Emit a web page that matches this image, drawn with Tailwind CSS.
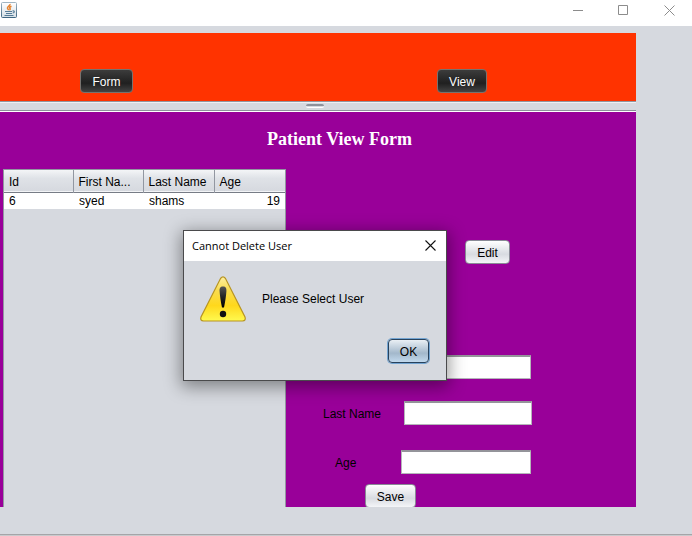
<!DOCTYPE html>
<html lang="en">
<head>
<meta charset="utf-8">
<title>Patient View Form</title>
<script src="https://cdn.jsdelivr.net/npm/@tailwindcss/browser@4"></script>
</head>
<body class="relative flex min-h-screen flex-col overflow-hidden bg-[#d6d9df] font-['Liberation_Sans',Arial,sans-serif] text-[12px] leading-4 text-black">
  <header class="flex h-[26px] items-start justify-between bg-white">
    <svg class="mt-0.5 ml-px size-4" viewBox="0 0 16 16" fill="none" aria-label="Java">
      <defs><linearGradient id="jb" x1="0" y1="0" x2="0" y2="1"><stop stop-color="#fff"/><stop offset="1" stop-color="#d5dfe6"/></linearGradient>
      <linearGradient id="js" x1="0" y1="0" x2="0" y2="1"><stop stop-color="#9fb4c2"/><stop offset="1" stop-color="#3f6681"/></linearGradient></defs>
      <rect x=".5" y=".5" width="15" height="15" rx="1" fill="url(#jb)" stroke="url(#js)"/>
      <path d="M9 2c.6 1.600-3 2.600-2.500 4.300.2.700 1 1.200 1 1.900M10.500 4.300C8.500 5 8.300 5.800 9 6.500c.5.700 0 1.300-.6 1.700" stroke="#e5822e" stroke-width="1.500"/>
      <path d="M4 9.500h7M5 11.500h6M3.500 13.500h9M11.500 9c2.500-.6 2.200 1.800.2 2" stroke="#557c97" stroke-width="1.200"/>
    </svg>
    <div class="flex text-[#8c8c8c]">
      <button type="button" aria-label="Minimize" class="flex h-5 w-[46px] items-center justify-center"><svg class="size-[11px]" viewBox="0 0 11 11" stroke="currentColor"><path d="M1 5.500h10"/></svg></button>
      <button type="button" aria-label="Maximize" class="flex h-5 w-[46px] items-center justify-center"><svg class="size-[11px]" viewBox="0 0 11 11" stroke="currentColor" fill="none"><path d="M.5.5h9v9h-9z"/></svg></button>
      <button type="button" aria-label="Close" class="flex h-5 w-[46px] items-center justify-center"><svg class="size-[11px]" viewBox="0 0 11 11" stroke="currentColor"><path d="M.5.5l10 10M10.500.5l-10 10"/></svg></button>
    </div>
  </header>

  <main class="mt-[7px] mr-14 flex flex-1 flex-col">
    <nav class="grid h-[68px] grid-cols-[357fr_199fr] items-end bg-[#ff3300] pb-2 pl-20">
      <div><button type="button" class="block h-6 w-[53px] rounded-[4px] border border-[#77736f] bg-linear-to-b from-[#3c3c3c] via-[#202020] via-60% to-[#444] pt-0.5 text-white">Form</button></div>
      <div><button type="button" class="block h-6 w-[50px] rounded-[4px] border border-[#77736f] bg-linear-to-b from-[#3c3c3c] via-[#202020] via-60% to-[#444] pt-0.5 text-white">View</button></div>
    </nav>
    <div class="flex h-[11px] flex-col border-t border-[#9297a1] bg-[#d6d9df]">
      <div class="flex h-2 justify-center border-t border-[#eff0f3] pt-px pr-1.5"><span class="h-1 w-[18px] rounded-sm border-t-2 border-b border-t-[#8d929b] border-b-white bg-[#d6d9df]"></span></div>
      <div class="h-px bg-[#8d919b]"></div>
      <div class="h-px bg-white"></div>
    </div>

    <section class="flex h-[395px] flex-col overflow-hidden bg-[#990099]">
      <h1 class="mt-[17px] h-10 shrink-0 pl-[43px] text-center font-['Liberation_Serif','Times_New_Roman',serif] text-[18px] leading-5 font-bold text-white">Patient View Form</h1>
      <div class="flex flex-1">
        <div class="ml-[3px] w-[283px] border-x border-t border-[#9297a1] bg-[#d6d9df]">
          <table class="w-full table-fixed border-collapse text-left">
            <thead>
              <tr class="h-[22px] border-b border-[#777c86] bg-linear-to-b from-[#f4f5f7] via-[#dfe2e7] via-40% to-[#d6d9df]">
                <th class="w-[69px] border-r border-[#9297a1] px-[5px] pt-0.5 font-normal">Id</th>
                <th class="w-[70px] border-r border-[#9297a1] px-[5px] pt-0.5 font-normal">First Na...</th>
                <th class="w-[71px] border-r border-[#9297a1] pt-0.5 pl-[5px] font-normal whitespace-nowrap">Last Name</th>
                <th class="px-[5px] pt-0.5 font-normal">Age</th>
              </tr>
            </thead>
            <tbody>
              <tr class="h-4 bg-white"><td class="px-[5px]">6</td><td class="px-1.5">syed</td><td class="px-1.5">shams</td><td class="px-[5px] text-right">19</td></tr>
            </tbody>
          </table>
        </div>
        <form class="flex flex-1 flex-col items-start pt-[71px]">
          <button type="button" class="ml-[179px] h-6 w-[45px] shrink-0 rounded-[4px] border border-[#898b96] bg-linear-to-b from-white via-[#d8dbe1] via-60% to-[#f4f5f8] pt-0.5">Edit</button>
          <div class="mt-[91px] flex items-center pl-[37px]">
            <label for="first" class="w-[81px]">First Name</label>
            <input id="first" type="text" class="h-6 w-[127px] border border-t-2 border-[#b5b5ba] border-t-[#94949a] bg-white px-1.5">
          </div>
          <div class="mt-[22px] flex items-center pl-[37px]">
            <label for="last" class="w-[81px] pt-0.5">Last Name</label>
            <input id="last" type="text" class="h-6 w-32 border border-t-2 border-[#b5b5ba] border-t-[#94949a] bg-white px-1.5">
          </div>
          <div class="mt-[25px] flex items-center pl-[49px]">
            <label for="age" class="w-[66px] pt-0.5">Age</label>
            <input id="age" type="text" class="h-6 w-[130px] border border-t-2 border-[#b5b5ba] border-t-[#94949a] bg-white px-1.5">
          </div>
          <button type="button" class="mt-2.5 ml-[79px] h-6 w-[51px] shrink-0 rounded-[4px] border border-[#898b96] bg-linear-to-b from-white via-[#d8dbe1] via-60% to-[#f4f5f8] pt-0.5">Save</button>
        </form>
      </div>
    </section>
  </main>
  <footer class="h-0.5 border-t border-[#a5a5a8] bg-[#c9cacd]"></footer>

  <div role="dialog" aria-labelledby="dlg-title" class="absolute top-[230px] left-[183px] w-[264px] border border-[#4a4a4c] bg-[#d6d9df] shadow-[0_4px_16px_2px_rgba(0,0,0,0.4)]">
    <div class="flex h-[30px] items-center justify-between bg-white pr-2.5 pl-2">
      <h2 id="dlg-title" class="font-['Open_Sans','Noto_Sans',sans-serif] text-[11px]">Cannot Delete User</h2>
      <button type="button" aria-label="Close" class="pb-0.5"><svg class="size-[11px]" viewBox="0 0 11 11" stroke="#111" stroke-width="1.100"><path d="M.5.5l10 10M10.500.5l-10 10"/></svg></button>
    </div>
    <div class="flex h-[75px] items-center gap-[15px] pl-[15px]">
      <svg class="size-12" viewBox="0 0 48 48" role="img" aria-label="Warning">
        <defs>
          <linearGradient id="w" x1="0" y1="0" x2="0" y2="1"><stop stop-color="#fff0a0"/><stop offset=".3" stop-color="#f9dc50"/><stop offset=".65" stop-color="#ffd81c"/><stop offset="1" stop-color="#fffa50"/></linearGradient>
          <linearGradient id="e" x1="0" y1="0" x2="0" y2="1"><stop stop-color="#555"/><stop offset=".5" stop-color="#222"/><stop offset="1" stop-color="#000"/></linearGradient>
        </defs>
        <path d="M21.500 3.500Q24 .4 26.500 3.500L46 42q1.200 3.700-2.500 4h-39Q.8 45.700 2 42Z" fill="url(#w)" stroke="#b79422" stroke-width="1.200"/>
        <path d="M24 11.500c2.900 0 3.600 2 3.400 4.800-.3 5-1.200 10.500-2.400 16.200h-2c-1.200-5.700-2.100-11.200-2.400-16.200-.2-2.800.5-4.800 3.400-4.800Z" fill="url(#e)"/>
        <circle cx="24" cy="39" r="3.200" fill="#111"/>
      </svg>
      <p>Please Select User</p>
    </div>
    <div class="mt-[3px] flex justify-end pr-[17px] pb-[17px]">
      <button type="button" class="h-6 w-[41px] rounded-[4px] border border-[#28425c] bg-linear-to-b from-[#e9eff4] via-[#a3b8cb] via-60% to-[#c2d9ed] pt-0.5 ring-1 ring-[#73a4d1]">OK</button>
    </div>
  </div>
</body>
</html>
